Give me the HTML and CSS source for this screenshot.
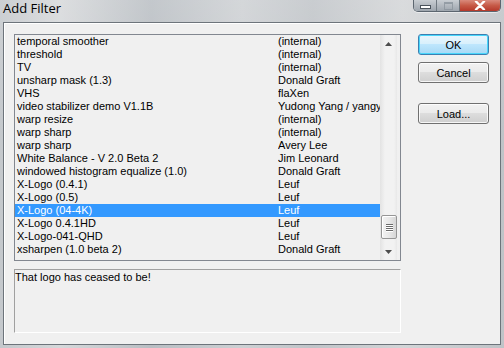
FILE: index.html
```html
<!DOCTYPE html>
<html>
<head>
<meta charset="utf-8">
<link rel="stylesheet" href="styles.css">
</head>
<body>
<div class="window">
  <div class="titlebar">
    <span class="title">Add Filter</span>
    <div class="caption-buttons">
      <div class="cbtn cbtn-min"><span class="min-glyph"></span></div>
      <div class="cbtn cbtn-max"><span class="max-glyph"></span></div>
      <div class="cbtn cbtn-close">
        <svg width="12" height="9" viewBox="0 0 12 9"><path d="M2 0.5 L10 8.5 M10 0.5 L2 8.5" stroke="#fff" stroke-width="2.4" stroke-linecap="round"/></svg>
      </div>
    </div>
  </div>
  <div class="client">
    <div class="left-col">
      <div class="listbox">
        <div class="rows">
          <div class="row"><span class="c1">temporal smoother</span><span class="c2">(internal)</span></div>
          <div class="row"><span class="c1">threshold</span><span class="c2">(internal)</span></div>
          <div class="row"><span class="c1">TV</span><span class="c2">(internal)</span></div>
          <div class="row"><span class="c1">unsharp mask (1.3)</span><span class="c2">Donald Graft</span></div>
          <div class="row"><span class="c1">VHS</span><span class="c2">flaXen</span></div>
          <div class="row"><span class="c1">video stabilizer demo V1.1B</span><span class="c2">Yudong Yang / yangyudong</span></div>
          <div class="row"><span class="c1">warp resize</span><span class="c2">(internal)</span></div>
          <div class="row"><span class="c1">warp sharp</span><span class="c2">(internal)</span></div>
          <div class="row"><span class="c1">warp sharp</span><span class="c2">Avery Lee</span></div>
          <div class="row"><span class="c1">White Balance - V 2.0 Beta 2</span><span class="c2">Jim Leonard</span></div>
          <div class="row"><span class="c1">windowed histogram equalize (1.0)</span><span class="c2">Donald Graft</span></div>
          <div class="row"><span class="c1">X-Logo (0.4.1)</span><span class="c2">Leuf</span></div>
          <div class="row"><span class="c1">X-Logo (0.5)</span><span class="c2">Leuf</span></div>
          <div class="row selected"><span class="c1">X-Logo (04-4K)</span><span class="c2">Leuf</span></div>
          <div class="row"><span class="c1">X-Logo 0.4.1HD</span><span class="c2">Leuf</span></div>
          <div class="row"><span class="c1">X-Logo-041-QHD</span><span class="c2">Leuf</span></div>
          <div class="row"><span class="c1">xsharpen (1.0 beta 2)</span><span class="c2">Donald Graft</span></div>
        </div>
        <div class="scrollbar">
          <div class="sb-arrow sb-up"><svg width="7" height="4" viewBox="0 0 7 4"><path d="M0 4 L3.5 0 L7 4 Z" fill="#4d4d4d"/></svg></div>
          <div class="sb-track">
            <div class="sb-thumb">
              <span class="grip"></span><span class="grip"></span><span class="grip"></span><span class="grip"></span>
            </div>
          </div>
          <div class="sb-arrow sb-down"><svg width="7" height="4" viewBox="0 0 7 4"><path d="M0 0 L7 0 L3.5 4 Z" fill="#4d4d4d"/></svg></div>
        </div>
      </div>
      <div class="desc">That logo has ceased to be!</div>
    </div>
    <div class="buttons">
      <button class="btn btn-default">OK</button>
      <button class="btn">Cancel</button>
      <button class="btn btn-load">Load...</button>
    </div>
  </div>
</div>
</body>
</html>
```

FILE: styles.css
```css
* { box-sizing: border-box; }
html, body { margin: 0; padding: 0; }
body {
  width: 504px;
  height: 348px;
  overflow: hidden;
  font-family: "Liberation Sans", Arial, sans-serif;
  font-size: 11px;
  color: #000;
}
.window {
  width: 504px;
  height: 348px;
  display: flex;
  flex-direction: column;
  background:
    linear-gradient(180deg, rgba(255,255,255,0.15), rgba(255,255,255,0) 40%),
    linear-gradient(90deg, #c4c8cc 0%, #d6d8da 12%, #b9bec3 30%, #cdd0d3 48%, #c0c4c8 62%, #d3d5d7 80%, #bfc3c7 100%);
}
.titlebar {
  height: 22px;
  flex: none;
  display: flex;
  align-items: flex-start;
  justify-content: space-between;
  padding-left: 3px;
  padding-right: 3px;
}
.title {
  font-family: "Open Sans", "Noto Sans", sans-serif;
  font-size: 13px;
  line-height: 16px;
  color: #000;
}
.caption-buttons {
  display: flex;
  height: 12px;
  border: 1px solid #5c6670;
  border-top: none;
  border-radius: 0 0 5px 5px;
  overflow: hidden;
  box-shadow: 0 1px 0 rgba(255,255,255,0.5);
}
.cbtn {
  height: 11px;
  display: flex;
  align-items: center;
  justify-content: center;
}
.cbtn-min, .cbtn-max {
  width: 23px;
  background: linear-gradient(180deg, #c9ced3 0%, #b3b9c0 50%, #9ea6ae 100%);
  border-right: 1px solid #6f7880;
}
.cbtn-close {
  width: 40px;
  background: linear-gradient(180deg, #d98a7c 0%, #c65a47 50%, #b5382a 100%);
}
.min-glyph {
  width: 11px;
  height: 4px;
  background: #fff;
  border: 1px solid #4a535c;
  margin-top: 3px;
}
.max-glyph {
  width: 9px;
  height: 8px;
  border: 1px solid #8b949c;
  border-top-width: 2px;
  opacity: 0.8;
}
.client {
  flex: 1;
  margin: 0 3px 3px 3px;
  background: #f0f0f0;
  border: 1px solid #6d747b;
  box-shadow: inset 1px 1px 0 #fff;
  display: flex;
  padding: 11px 0 0 10px;
}
.left-col {
  width: 387px;
  display: flex;
  flex-direction: column;
  gap: 8px;
}
.listbox {
  height: 227px;
  border: 1px solid #828790;
  background: #f0f0f0;
  display: flex;
  overflow: hidden;
}
.rows {
  flex: 1;
  min-width: 0;
  overflow: hidden;
}
.row {
  height: 13px;
  line-height: 13px;
  display: grid;
  grid-template-columns: 263px 1fr;
  white-space: nowrap;
  overflow: hidden;
}
.row .c1 { padding-left: 2px; overflow: hidden; }
.row .c2 { overflow: hidden; }
.row.selected {
  background: #3399ff;
  color: #fff;
}
.scrollbar {
  width: 20px;
  flex: none;
  display: flex;
  flex-direction: column;
  padding-right: 3px;
  background: linear-gradient(90deg, #e3e3e3, #f2f2f2 25%, #f2f2f2 70%, #e8e8e8 85%, #f0f0f0 86%);
}
.sb-arrow {
  height: 17px;
  flex: none;
  display: flex;
  align-items: center;
  justify-content: center;
}
.sb-track {
  flex: 1;
  display: flex;
  flex-direction: column;
  justify-content: flex-end;
  padding-bottom: 4px;
}
.sb-thumb {
  height: 24px;
  margin: 0 0 0 1px;
  border: 1px solid #959595;
  border-radius: 2px;
  background: linear-gradient(90deg, #f3f3f3 0%, #e8e8e8 50%, #d6d6d6 100%);
  box-shadow: inset 1px 1px 0 #fff;
  display: flex;
  flex-direction: column;
  align-items: center;
  justify-content: center;
  gap: 1px;
}
.grip {
  width: 7px;
  height: 1px;
  background: #6b6b6b;
  box-shadow: 0 1px 0 #fff;
}
.desc {
  height: 64px;
  border-top: 1px solid #a0a0a0;
  border-left: 1px solid #a0a0a0;
  border-right: 1px solid #fff;
  border-bottom: 1px solid #fff;
  padding: 1px 0 0 0;
  line-height: 13px;
  background: #f0f0f0;
}
.buttons {
  display: flex;
  flex-direction: column;
  margin-left: 17px;
  width: 71px;
}
.btn {
  font-family: "Liberation Sans", Arial, sans-serif;
  font-size: 11px;
  color: #000;
  height: 21px;
  width: 71px;
  padding: 0;
  border: 1px solid #707070;
  border-radius: 3px;
  box-shadow: inset 0 0 0 1px rgba(255,255,255,0.8);
  background: linear-gradient(180deg, #f2f2f2 0%, #ebebeb 45%, #dddddd 50%, #cfcfcf 100%);
  margin-bottom: 7px;
}
.btn-default {
  border-color: #3c7fb1;
  background: linear-gradient(180deg, #eaf6fd 0%, #d9f0fc 45%, #bee6fd 50%, #a7d9f5 100%);
  box-shadow: inset 0 0 0 1px #48d6fb;
}
.btn-load {
  margin-top: 13px;
}
```
